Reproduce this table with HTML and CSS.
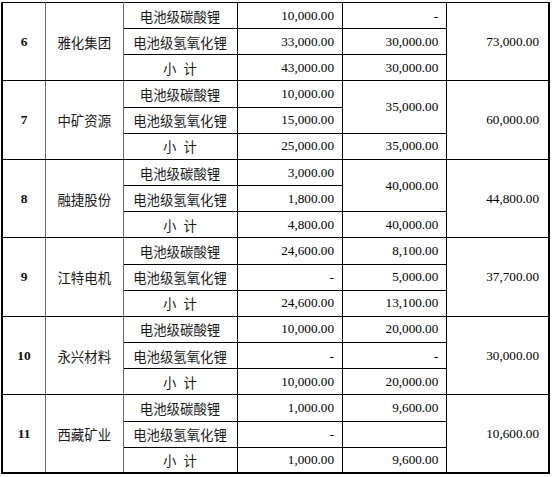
FILE: index.html
```html
<!DOCTYPE html>
<html lang="zh-CN">
<head>
<meta charset="utf-8">
<title>采购表</title>
<link rel="stylesheet" href="styles.css">
</head>
<body>
<div class="page">
<table class="sheet">
  <colgroup>
    <col class="c-no"><col class="c-name"><col class="c-prod"><col class="c-a"><col class="c-b"><col class="c-tot">
  </colgroup>
  <tbody>
    <tr>
      <td class="no line-l" rowspan="3">6</td>
      <td class="name line-l" rowspan="3">雅化集团</td>
      <td class="prod">电池级碳酸锂</td>
      <td class="num">10,000.00</td>
      <td class="num">-</td>
      <td class="num tot" rowspan="3">73,000.00</td>
    </tr>
    <tr>
      <td class="prod">电池级氢氧化锂</td>
      <td class="num">33,000.00</td>
      <td class="num">30,000.00</td>
    </tr>
    <tr>
      <td class="prod sub">小 计</td>
      <td class="num">43,000.00</td>
      <td class="num">30,000.00</td>
    </tr>

    <tr>
      <td class="no line-l" rowspan="3">7</td>
      <td class="name line-l" rowspan="3">中矿资源</td>
      <td class="prod">电池级碳酸锂</td>
      <td class="num">10,000.00</td>
      <td class="num" rowspan="2">35,000.00</td>
      <td class="num tot" rowspan="3">60,000.00</td>
    </tr>
    <tr>
      <td class="prod">电池级氢氧化锂</td>
      <td class="num">15,000.00</td>
    </tr>
    <tr>
      <td class="prod sub">小 计</td>
      <td class="num">25,000.00</td>
      <td class="num">35,000.00</td>
    </tr>

    <tr>
      <td class="no line-l" rowspan="3">8</td>
      <td class="name line-l" rowspan="3">融捷股份</td>
      <td class="prod">电池级碳酸锂</td>
      <td class="num">3,000.00</td>
      <td class="num" rowspan="2">40,000.00</td>
      <td class="num tot" rowspan="3">44,800.00</td>
    </tr>
    <tr>
      <td class="prod">电池级氢氧化锂</td>
      <td class="num">1,800.00</td>
    </tr>
    <tr>
      <td class="prod sub">小 计</td>
      <td class="num">4,800.00</td>
      <td class="num">40,000.00</td>
    </tr>

    <tr>
      <td class="no line-l" rowspan="3">9</td>
      <td class="name line-l" rowspan="3">江特电机</td>
      <td class="prod">电池级碳酸锂</td>
      <td class="num">24,600.00</td>
      <td class="num">8,100.00</td>
      <td class="num tot" rowspan="3">37,700.00</td>
    </tr>
    <tr>
      <td class="prod">电池级氢氧化锂</td>
      <td class="num">-</td>
      <td class="num">5,000.00</td>
    </tr>
    <tr>
      <td class="prod sub">小 计</td>
      <td class="num">24,600.00</td>
      <td class="num">13,100.00</td>
    </tr>

    <tr>
      <td class="no line-l" rowspan="3">10</td>
      <td class="name line-l" rowspan="3">永兴材料</td>
      <td class="prod">电池级碳酸锂</td>
      <td class="num">10,000.00</td>
      <td class="num">20,000.00</td>
      <td class="num tot" rowspan="3">30,000.00</td>
    </tr>
    <tr>
      <td class="prod">电池级氢氧化锂</td>
      <td class="num">-</td>
      <td class="num">-</td>
    </tr>
    <tr>
      <td class="prod sub">小 计</td>
      <td class="num">10,000.00</td>
      <td class="num">20,000.00</td>
    </tr>

    <tr>
      <td class="no line-l" rowspan="3">11</td>
      <td class="name line-l" rowspan="3">西藏矿业</td>
      <td class="prod">电池级碳酸锂</td>
      <td class="num">1,000.00</td>
      <td class="num">9,600.00</td>
      <td class="num tot" rowspan="3">10,600.00</td>
    </tr>
    <tr>
      <td class="prod">电池级氢氧化锂</td>
      <td class="num">-</td>
      <td class="num"></td>
    </tr>
    <tr>
      <td class="prod sub">小 计</td>
      <td class="num">1,000.00</td>
      <td class="num">9,600.00</td>
    </tr>
  </tbody>
</table>
</div>
</body>
</html>
```

FILE: styles.css
```css
html, body {
  margin: 0;
  padding: 0;
  background: #ffffff;
}

.page {
  padding: 2px 0 0 1px;
}

.sheet {
  border-collapse: collapse;
  table-layout: fixed;
  width: 549px;
  border-left: 2px solid #000;
  border-right: 2px solid #000;
  border-bottom: 2px solid #000;
  border-top: 1px solid #000;
  color: #111;
}

.c-no { width: 43.5px; }
.c-name { width: 77.5px; }
.c-prod { width: 114px; }
.c-a { width: 105.5px; }
.c-b { width: 104.3px; }
.c-tot { width: 102.2px; }

.sheet tr {
  height: 26.17px;
}

.sheet td {
  border: 1px solid #000;
  padding: 0;
  vertical-align: middle;
  white-space: nowrap;
  line-height: 16px;
}

.sheet td.no {
  text-align: center;
  font-family: "Liberation Serif", "Times New Roman", serif;
  font-weight: bold;
  font-size: 13.4px;
}

.sheet td.name,
.sheet td.prod {
  text-align: center;
  font-family: "Noto Sans CJK SC", "Noto Sans", sans-serif;
  font-size: 13.4px;
  color: #1a1a1a;
}

.sheet td.sub {
  word-spacing: 4px;
}

.sheet td.num {
  text-align: right;
  font-family: "Liberation Serif", "Times New Roman", serif;
  font-size: 13.2px;
  padding-right: 8px;
  color: #000;
}

.sheet td.num.tot {
  padding-right: 9px;
}

.sheet td.line-l {
  border-right-color: #6a6a6a;
}
```
